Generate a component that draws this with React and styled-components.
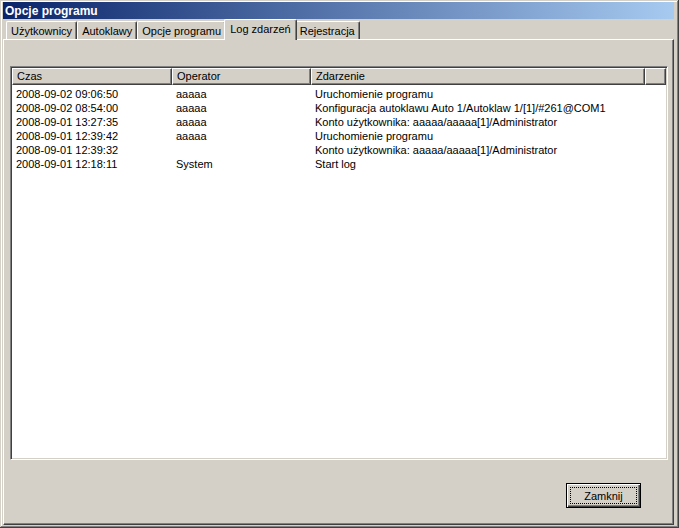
import styled, { createGlobalStyle } from "styled-components";

const Global = createGlobalStyle`
  body {
    margin: 0;
    background: #d4d0c8;
    font-family: "Liberation Sans", Arial, sans-serif;
    font-size: 11px;
    color: #000;
  }
`;

const Window = styled.div`
  box-sizing: border-box;
  width: 679px;
  height: 528px;
  padding: 2px 5px 3px 3px;
  display: flex;
  flex-direction: column;
  background: #d4d0c8;
  box-shadow: inset -1px -1px #404040, inset 1px 1px #d4d0c8,
    inset -2px -2px #808080, inset 2px 2px #ffffff;
`;

const TitleBar = styled.div`
  height: 17px;
  display: flex;
  align-items: center;
  padding-left: 2px;
  background: linear-gradient(to right, #0a246a, #a6caf0);
  color: #fff;
  font-weight: bold;
  font-size: 12px;
`;

const TabStrip = styled.div`
  height: 20px;
  display: flex;
  align-items: flex-end;
  padding-left: 3px;
`;

const Tab = styled.div`
  box-sizing: border-box;
  height: ${(p) => (p.$active ? "21px" : "18px")};
  padding: ${(p) => (p.$active ? "2px 5px 0" : "2px 4px 0")};
  margin: ${(p) => (p.$active ? "0 -2px -1px" : "0")};
  position: relative;
  z-index: ${(p) => (p.$active ? 1 : 0)};
  background: #d4d0c8;
  border-top: 1px solid #fff;
  border-left: 1px solid #fff;
  border-right: 1px solid #404040;
  box-shadow: inset -1px 0 #808080;
  border-radius: 2px 2px 0 0;
  line-height: 14px;
  white-space: nowrap;
`;

const Panel = styled.div`
  flex: 1;
  display: flex;
  flex-direction: column;
  padding: 26px 5px 13px 6px;
  border-top: 1px solid #fff;
  border-left: 1px solid #fff;
  border-right: 1px solid #404040;
  border-bottom: 1px solid #404040;
  box-shadow: inset -1px -1px #808080;
`;

const ListView = styled.div`
  height: 394px;
  box-sizing: border-box;
  background: #fff;
  border: 1px solid;
  border-color: #808080 #fff #fff #808080;
  box-shadow: inset 1px 1px #404040, inset -1px -1px #d4d0c8;
  padding: 1px;
  display: flex;
  flex-direction: column;
`;

const HeaderRow = styled.div`
  display: flex;
  height: 17px;
`;

const HeaderCell = styled.div`
  box-sizing: border-box;
  width: ${(p) => p.$w};
  flex: ${(p) => (p.$grow ? 1 : "none")};
  background: #d4d0c8;
  border-top: 1px solid #fff;
  border-left: 1px solid #fff;
  border-right: 1px solid #404040;
  border-bottom: 1px solid #404040;
  box-shadow: inset -1px -1px #808080;
  padding-left: 4px;
  line-height: 15px;
`;

const Rows = styled.div`
  padding-top: 2px;
`;

const Row = styled.div`
  display: flex;
  height: 14px;
  line-height: 14px;
`;

const Cell = styled.div`
  width: ${(p) => p.$w};
  padding-left: 4px;
  box-sizing: border-box;
  white-space: nowrap;
`;

const Footer = styled.div`
  margin-top: 23px;
  display: flex;
  justify-content: flex-end;
  padding-right: 27px;
`;

const Button = styled.button`
  width: 75px;
  height: 25px;
  padding: 0;
  background: #d4d0c8;
  font-family: inherit;
  font-size: 11px;
  color: #000;
  border: 1px solid #000;
  box-shadow: inset 1px 1px #fff, inset -1px -1px #404040,
    inset -2px -2px #808080;
  position: relative;
  &::after {
    content: "";
    position: absolute;
    inset: 3px;
    border: 1px dotted #000;
  }
`;

const tabs = ["Użytkownicy", "Autoklawy", "Opcje programu", "Log zdarzeń", "Rejestracja"];

const log = [
  ["2008-09-02 09:06:50", "aaaaa", "Uruchomienie programu"],
  ["2008-09-02 08:54:00", "aaaaa", "Konfiguracja autoklawu Auto 1/Autoklaw 1/[1]/#261@COM1"],
  ["2008-09-01 13:27:35", "aaaaa", "Konto użytkownika: aaaaa/aaaaa[1]/Administrator"],
  ["2008-09-01 12:39:42", "aaaaa", "Uruchomienie programu"],
  ["2008-09-01 12:39:32", "", "Konto użytkownika: aaaaa/aaaaa[1]/Administrator"],
  ["2008-09-01 12:18:11", "System", "Start log"],
];

export default function App() {
  return (
    <>
      <Global />
      <Window>
        <TitleBar>Opcje programu</TitleBar>
        <TabStrip>
          {tabs.map((t) => (
            <Tab key={t} $active={t === "Log zdarzeń"}>
              {t}
            </Tab>
          ))}
        </TabStrip>
        <Panel>
          <ListView>
            <HeaderRow>
              <HeaderCell $w="160px">Czas</HeaderCell>
              <HeaderCell $w="139px">Operator</HeaderCell>
              <HeaderCell $w="334px">Zdarzenie</HeaderCell>
              <HeaderCell $grow />
            </HeaderRow>
            <Rows>
              {log.map((r, i) => (
                <Row key={i}>
                  <Cell $w="160px">{r[0]}</Cell>
                  <Cell $w="139px">{r[1]}</Cell>
                  <Cell $w="334px">{r[2]}</Cell>
                </Row>
              ))}
            </Rows>
          </ListView>
          <Footer>
            <Button>Zamknij</Button>
          </Footer>
        </Panel>
      </Window>
    </>
  );
}
